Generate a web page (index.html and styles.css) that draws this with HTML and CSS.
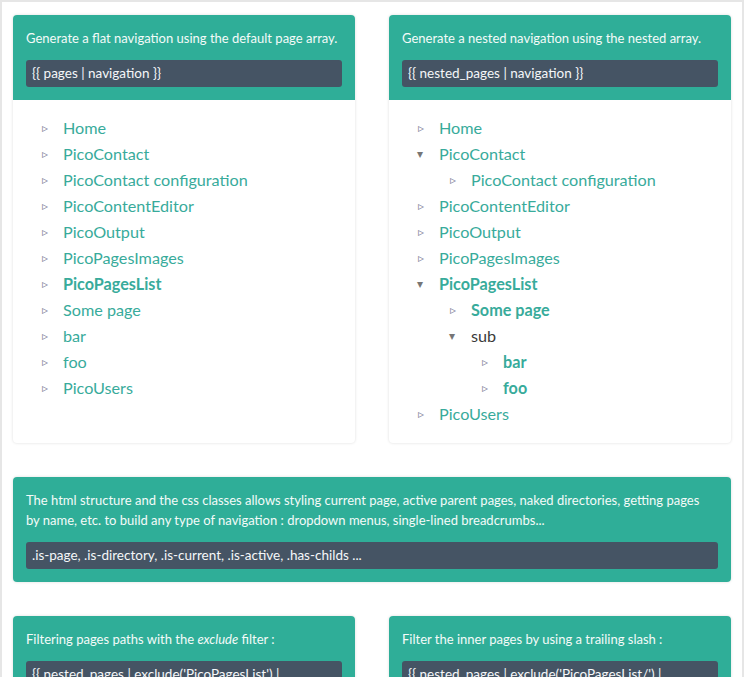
FILE: index.html
```html
<!DOCTYPE html>
<html>
<head>
<meta charset="utf-8">
<link rel="stylesheet" href="styles.css">
</head>
<body>
<div class="frame">
  <div class="row two">
    <section class="card">
      <div class="card-head">
        <p class="desc">Generate a flat navigation using the default page array.</p>
        <div class="code">{{ pages | navigation }}</div>
      </div>
      <div class="card-body">
        <ul class="nav">
          <li><a>Home</a></li>
          <li><a>PicoContact</a></li>
          <li><a>PicoContact configuration</a></li>
          <li><a>PicoContentEditor</a></li>
          <li><a>PicoOutput</a></li>
          <li><a>PicoPagesImages</a></li>
          <li><a class="current">PicoPagesList</a></li>
          <li><a>Some page</a></li>
          <li><a>bar</a></li>
          <li><a>foo</a></li>
          <li><a>PicoUsers</a></li>
        </ul>
      </div>
    </section>
    <section class="card">
      <div class="card-head">
        <p class="desc">Generate a nested navigation using the nested array.</p>
        <div class="code">{{ nested_pages | navigation }}</div>
      </div>
      <div class="card-body">
        <ul class="nav">
          <li><a>Home</a></li>
          <li class="open"><a>PicoContact</a>
            <ul>
              <li><a>PicoContact configuration</a></li>
            </ul>
          </li>
          <li><a>PicoContentEditor</a></li>
          <li><a>PicoOutput</a></li>
          <li><a>PicoPagesImages</a></li>
          <li class="open"><a class="current">PicoPagesList</a>
            <ul>
              <li><a class="current">Some page</a></li>
              <li class="open"><span class="dir">sub</span>
                <ul>
                  <li><a class="current">bar</a></li>
                  <li><a class="current">foo</a></li>
                </ul>
              </li>
            </ul>
          </li>
          <li><a>PicoUsers</a></li>
        </ul>
      </div>
    </section>
  </div>

  <div class="row">
    <section class="card">
      <div class="card-head">
        <p class="desc wide">The html structure and the css classes allows styling current page, active parent pages, naked directories, getting pages by name, etc. to build any type of navigation : dropdown menus, single-lined breadcrumbs...</p>
        <div class="code">.is-page, .is-directory, .is-current, .is-active, .has-childs ...</div>
      </div>
    </section>
  </div>

  <div class="row two">
    <section class="card">
      <div class="card-head">
        <p class="desc">Filtering pages paths with the <em>exclude</em> filter :</p>
        <div class="code">{{ nested_pages | exclude('PicoPagesList') |</div>
      </div>
    </section>
    <section class="card">
      <div class="card-head">
        <p class="desc">Filter the inner pages by using a trailing slash :</p>
        <div class="code">{{ nested_pages | exclude('PicoPagesList/') |</div>
      </div>
    </section>
  </div>
</div>
</body>
</html>
```

FILE: styles.css
```css
html, body {
  margin: 0;
  padding: 0;
  background: #ffffff;
}

body {
  font-family: Lato, "Open Sans", sans-serif;
  color: #333333;
}

.frame {
  border: 2px solid #e6e6e6;
  border-bottom: none;
  padding: 13px 11px 40px;
  display: flex;
  flex-direction: column;
  gap: 34px;
}

.row {
  display: grid;
  grid-template-columns: 1fr;
}

.row.two {
  grid-template-columns: 1fr 1fr;
  column-gap: 34px;
}

.card {
  background: #ffffff;
  border-radius: 4px;
  box-shadow: 0 0 3px rgba(0, 0, 0, 0.14);
  overflow: hidden;
}

.card-head {
  background: #2fae98;
  padding: 13px;
  display: flex;
  flex-direction: column;
  gap: 12px;
}

.desc {
  margin: 0;
  color: #f4fbf9;
  font-size: 13px;
  line-height: 20px;
}

.desc.wide {
  padding-right: 12px;
}

.code {
  background: #455464;
  color: #f5f7f9;
  border-radius: 3px;
  padding: 0 6px;
  height: 27px;
  line-height: 27px;
  font-size: 13.5px;
  white-space: nowrap;
  overflow: hidden;
}

.card-body {
  padding: 15px 12px 16px 50px;
}

.nav,
.nav ul {
  list-style: none;
  margin: 0;
  padding: 0;
}

.nav ul {
  padding-left: 32px;
}

.nav li {
  position: relative;
  font-size: 16.2px;
  line-height: 26px;
}

.nav li::before {
  content: "\25B9";
  position: absolute;
  left: -21px;
  top: 0;
  font-family: "DejaVu Sans", sans-serif;
  font-size: 12px;
  line-height: 26px;
  color: #84849a;
}

.nav li.open::before {
  content: "\25BE";
  left: -22px;
  color: #767676;
}

.nav a {
  color: #38ab9b;
  text-decoration: none;
}

.nav a.current {
  font-weight: bold;
}

.nav .dir {
  color: #3a3a3a;
}
```
